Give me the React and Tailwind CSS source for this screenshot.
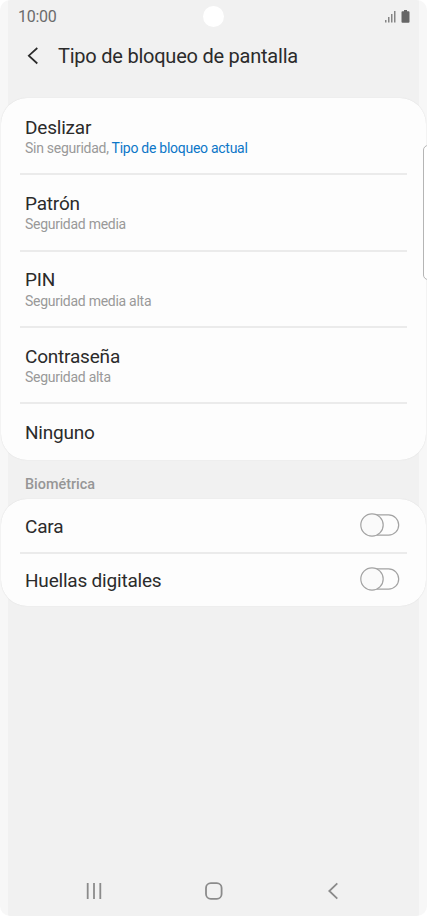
import React, { useState } from 'react';

const lockTypes = [
  { name: 'Deslizar', security: 'Sin seguridad, ', current: 'Tipo de bloqueo actual' },
  { name: 'Patrón', security: 'Seguridad media' },
  { name: 'PIN', security: 'Seguridad media alta' },
  { name: 'Contraseña', security: 'Seguridad alta' },
];

const StatusBar = () => (
  <div className="relative flex h-[34px] shrink-0 items-center justify-between pl-[18px] pr-4 text-[#6b6b6b]">
    <span className="text-base leading-[34px] tracking-[-0.3px]">10:00</span>
    {/* Camera hole */}
    <div className="absolute left-[203px] top-[6px] h-[21px] w-[21px] rounded-full bg-white" />
    <svg width="27" height="14" viewBox="0 0 27 14" fill="#666666">
      <g fill="#858585">
        <rect x="1" y="10" width="1.5" height="2.5" />
        <rect x="4" y="7" width="1.5" height="5.5" />
        <rect x="7" y="4" width="1.5" height="8.5" />
        <rect x="10" y="1" width="1.5" height="11.5" />
      </g>
      <path d="M20 0h3v1.200h1.500a1 1 0 0 1 1 1v9.600a1 1 0 0 1-1 1h-6a1 1 0 0 1-1-1v-9.600a1 1 0 0 1 1-1h1.500z" />
    </svg>
  </div>
);

const Header = () => (
  <header className="flex h-[64px] shrink-0 items-start pl-[26px]">
    <button className="mt-[12px] h-5 w-[14px]">
      <svg width="14" height="20" viewBox="0 0 14 20" fill="none" stroke="#2b2b2b" strokeWidth="1.7">
        <path d="M11.300 2L2.800 9.700L11.300 17.500" />
      </svg>
    </button>
    <h1 className="ml-[18px] mt-[8px] whitespace-nowrap text-xl leading-7 tracking-[-0.23px] text-[#2b2b2b]">
      Tipo de bloqueo de pantalla
    </h1>
  </header>
);

const Divider = () => <div className="mx-[19px] -mb-px h-[2px] shrink-0 bg-[#ebebeb]" />;

const Toggle = ({ label }) => {
  const [on, setOn] = useState(false);

  return (
    <button className="-mt-px" role="switch" aria-checked={on} aria-label={label} onClick={() => setOn(!on)}>
      <svg width="40" height="24" viewBox="0 0 40 24" fill="#fdfdfd" stroke="#a3a3a3" strokeWidth="1.2">
        <rect x="1.500" y="1.900" width="37.200" height="20.200" rx="10.100" />
        <circle cx={on ? 28 : 12} cy="12" r="11.200" fill="#fafafa" />
      </svg>
    </button>
  );
};

const BiometricRow = ({ label }) => (
  <div className="flex h-[53px] items-center justify-between pl-6 pr-[26px]">
    <span className="pt-[2px] text-[19px] leading-6 tracking-[-0.2px]">{label}</span>
    <Toggle label={label} />
  </div>
);

const NavBar = () => (
  <nav className="mt-auto flex h-[50px] shrink-0 items-center justify-between px-[84px]">
    <svg width="20" height="20" viewBox="0 0 20 20" fill="none" stroke="#8b8b8b" strokeWidth="1.800">
      <path d="M3.700 2v16M10 2v16M16.300 2v16" />
    </svg>
    <svg width="20" height="20" viewBox="0 0 20 20" fill="none" stroke="#8b8b8b" strokeWidth="1.800">
      <rect x="2" y="2.200" width="15.600" height="15.600" rx="4.800" />
    </svg>
    <svg width="20" height="20" viewBox="0 0 20 20" fill="none" stroke="#8b8b8b" strokeWidth="1.800">
      <path d="M14.300 2.300L6.300 10L14.300 17.700" />
    </svg>
  </nav>
);

export default function App() {
  return (
    <div className="bg-white">
      <div className="relative flex h-[916px] w-[427px] flex-col overflow-hidden rounded-[10px] bg-[linear-gradient(to_right,#f7f7f7_8px,#f1f1f1_8px,#f1f1f1_419px,#f7f7f7_419px)] font-['Roboto',sans-serif] text-[#2b2b2b]">
        <StatusBar />
        <Header />

        <section className="mx-px flex h-[362px] shrink-0 flex-col rounded-[26px] bg-[#fdfdfd] shadow-[0_0_1px_#d0d0d0]">
          {lockTypes.map((type) => (
            <React.Fragment key={type.name}>
              <div className="h-[75.300px] shrink-0 pl-6 pt-[17.700px]">
                <div className="text-[19px] leading-6 tracking-[-0.2px]">{type.name}</div>
                <div className="-mt-[0.500px] text-sm leading-[18px] tracking-[-0.27px] text-[#999999]">
                  {type.security}
                  {type.current && <span className="text-[#0c77c8]">{type.current}</span>}
                </div>
              </div>
              <Divider />
            </React.Fragment>
          ))}
          <div className="flex-1 pl-6 pt-[18px] text-[19px] leading-6 tracking-[-0.2px]">Ninguno</div>
        </section>

        <h2 className="h-[39px] shrink-0 pl-[25px] pt-[15px] text-[14.400px] font-medium leading-5 text-[#969696]">
          Biométrica
        </h2>

        <section className="mx-px h-[107px] shrink-0 rounded-[26px] bg-[#fdfdfd] shadow-[0_0_1px_#d0d0d0]">
          <BiometricRow label="Cara" />
          <Divider />
          <BiometricRow label="Huellas digitales" />
        </section>

        <NavBar />

        {/* Edge panel handle */}
        <div className="absolute -right-[6px] top-[145px] h-[135px] w-[10px] rounded-[5px] border border-[#b5b5b5] bg-white" />
      </div>
    </div>
  );
}
